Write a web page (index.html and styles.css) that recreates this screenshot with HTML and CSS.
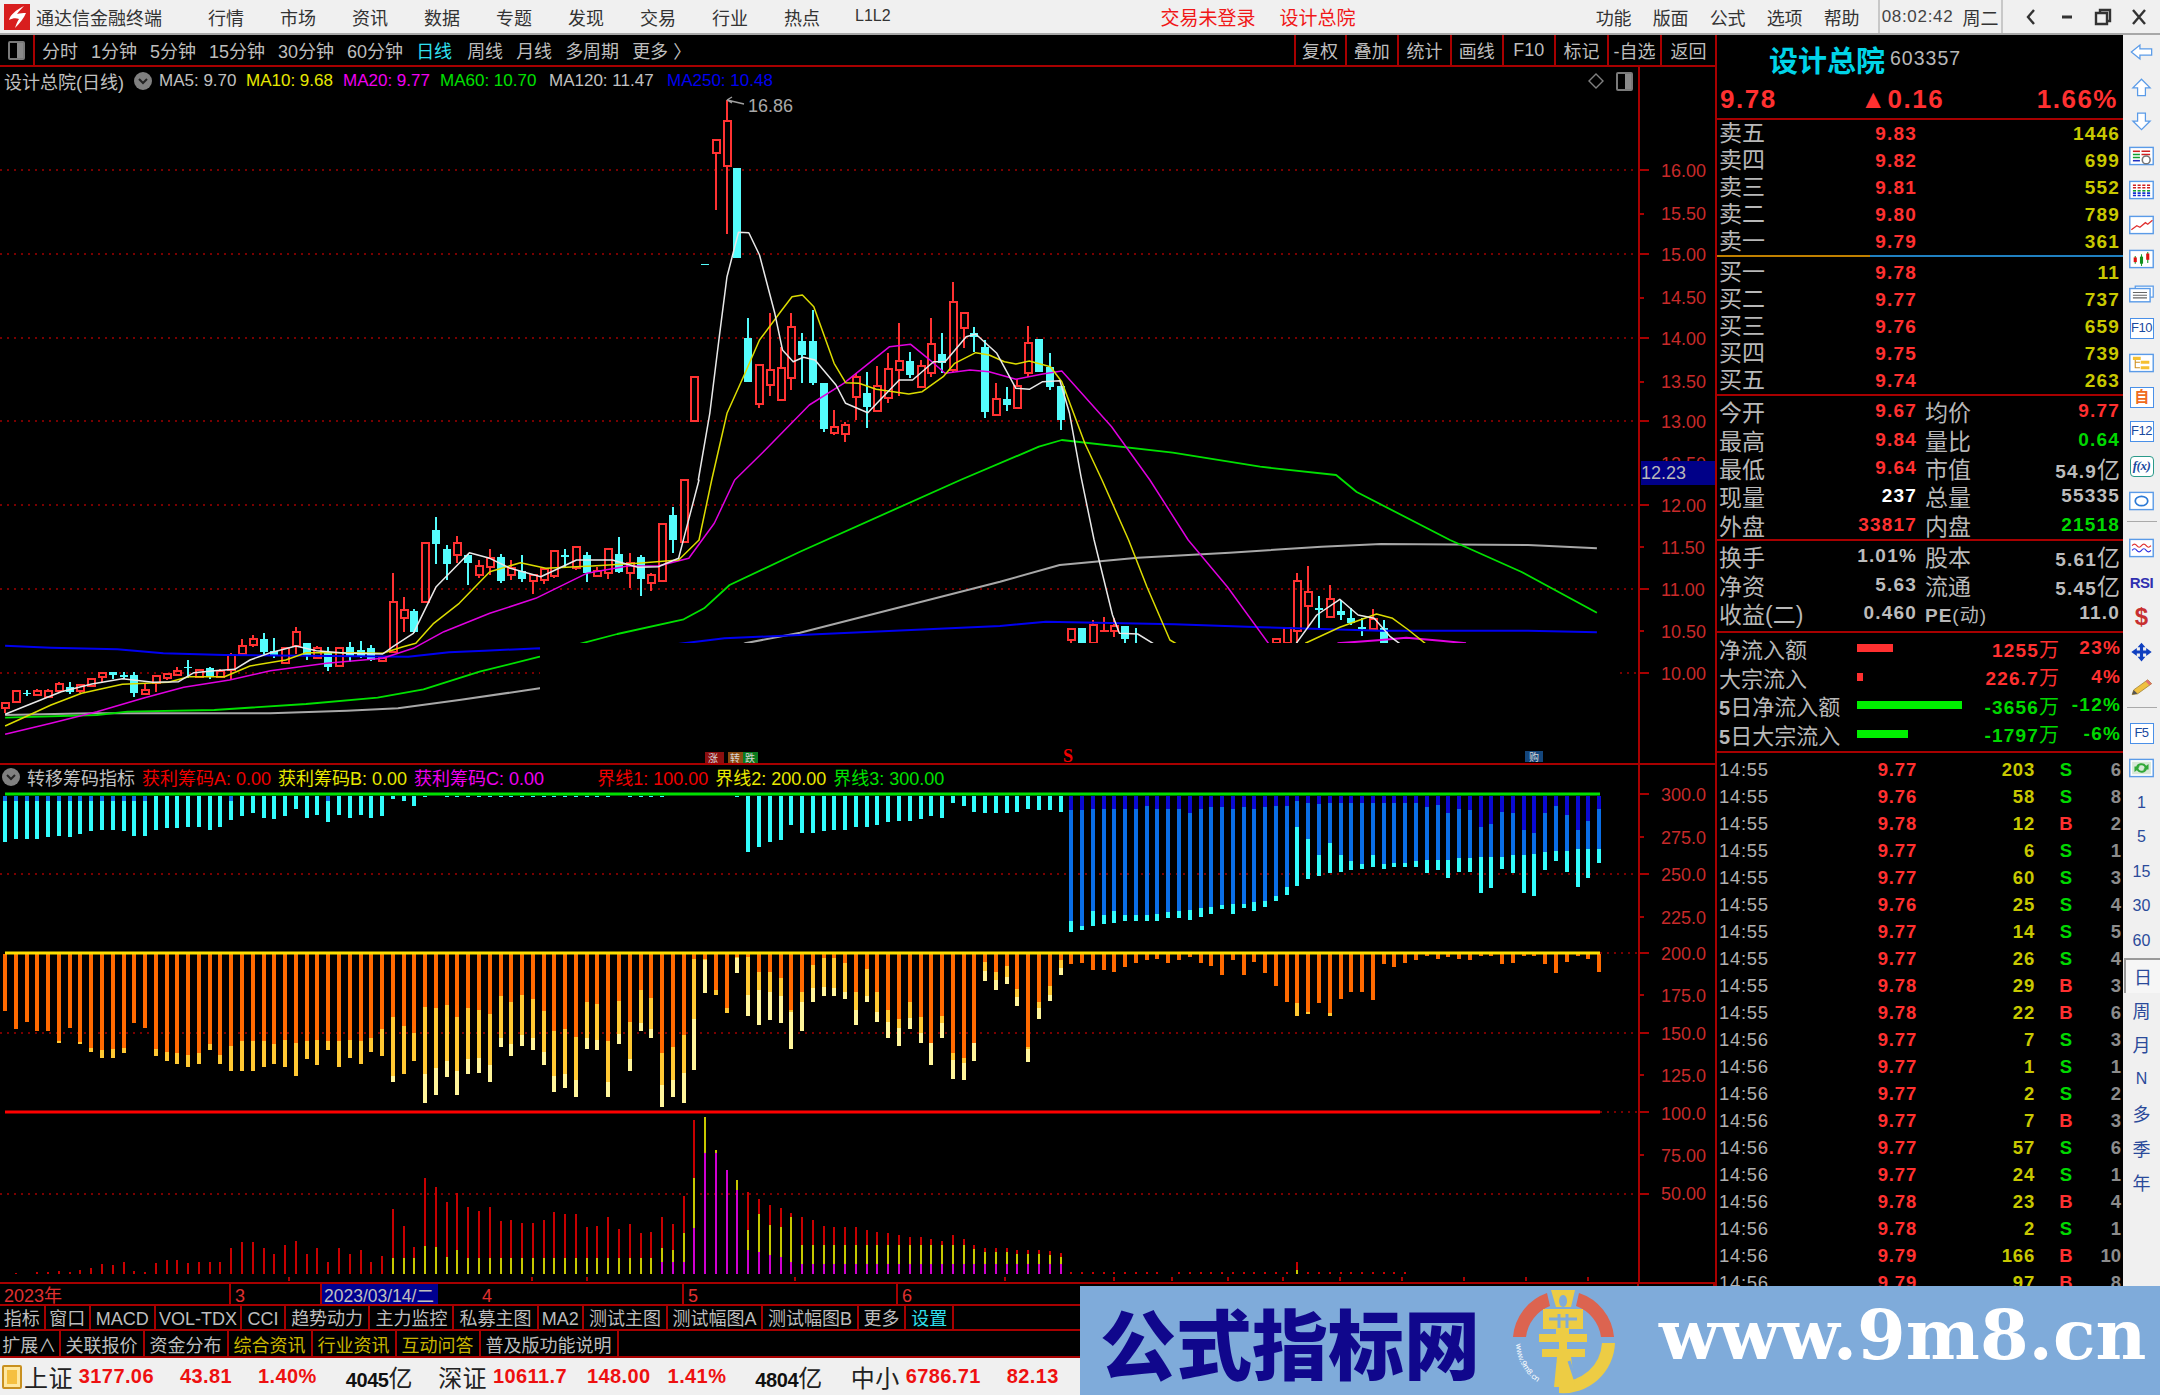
FILE: index.html
```html
<!DOCTYPE html>
<html lang="zh-CN">
<head>
<meta charset="utf-8">
<title>通达信金融终端</title>
<link rel="stylesheet" href="styles.css">
</head>
<body>
<div class="app">
  <header class="titlebar">
    <svg class="applogo" viewBox="0 0 26 26"><rect width="26" height="26" fill="#d81e1e"/><path d="M20 2 C12 6 6 11 5 16 C9 14 12 14 15 15 C13 18 12 21 11 24 C16 19 20 14 22 9 C19 9 16 9 13 10 C15 7 18 4 20 2Z" fill="#fff"/></svg>
    <span class="apptitle">通达信金融终端</span>
    <nav class="menu"><span>行情</span><span>市场</span><span>资讯</span><span>数据</span><span>专题</span><span>发现</span><span>交易</span><span>行业</span><span>热点</span><span class="l12">L1L2</span></nav>
    <div class="alerts"><span>交易未登录</span><span>设计总院</span></div>
    <nav class="menu menu-r"><span>功能</span><span>版面</span><span>公式</span><span>选项</span><span>帮助</span></nav>
    <div class="clock"><span class="time">08:02:42</span><span>周二</span></div>
    <div class="winbtns">
      <svg viewBox="0 0 14 18"><path d="M10 2 L4 9 L10 16" fill="none" stroke="#333" stroke-width="2.4"/></svg>
      <svg viewBox="0 0 14 18"><path d="M2 9 H12" stroke="#333" stroke-width="3"/></svg>
      <svg viewBox="0 0 18 18"><path d="M6 5 V2 H16 V13 H13 M2 5 H13 V16 H2 Z" fill="none" stroke="#333" stroke-width="2.4"/></svg>
      <svg viewBox="0 0 16 18"><path d="M2 2 L14 16 M14 2 L2 16" stroke="#333" stroke-width="2.4"/></svg>
    </div>
  </header>

  <div class="main">
    <div class="work">
      <div class="leftcol">
        <div class="toolbar">
          <div class="tb-icon"><i class="sq"></i></div>
          <div class="periods"><span>分时</span><span>1分钟</span><span>5分钟</span><span>15分钟</span><span>30分钟</span><span>60分钟</span><span class="cyan">日线</span><span>周线</span><span>月线</span><span>多周期</span><span>更多 〉</span></div>
          <div class="tb-right"><span>复权</span><span>叠加</span><span>统计</span><span>画线</span><span>F10</span><span>标记</span><span>-自选</span><span>返回</span></div>
        </div>

        <div class="chart">
          <svg class="plot" width="1715" height="1215" viewBox="0 67 1715 1215" xmlns="http://www.w3.org/2000/svg">
            <defs>
              <clipPath id="mainclip"><polygon points="0,67 1638,67 1638,643 540,643 540,764 0,764"/></clipPath>
            </defs>
            <g class="dots">
              <path clip-path="url(#mainclip)" d="M0 170H1638M0 254H1638M0 338H1638M0 421H1638M0 505H1638M0 589H1638M0 673H1638"/>
              <path d="M1620 673H1638M0 874H1638M0 1033H1638M0 1194H1638M1600 953H1638M1600 1112H1638"/>
            </g>
            <g id="lower"></g>
            <g id="candles" clip-path="url(#mainclip)"></g>
            <g id="mas" clip-path="url(#mainclip)" fill="none"></g>
            <path class="limit" stroke="#00e000" d="M5 794H1600"/>
            <path class="limit" stroke="#ffe000" d="M5 953H1600"/>
            <path class="limit" stroke="#ff0000" d="M5 1112H1600"/>
            <path class="arrow" d="M727 100 L744 104 M727 100 l5 -3 M727 100 l5 3"/>
            <text class="hi" x="748" y="112">16.86</text>
            <g class="redline">
              <path d="M0 764H1715M1639 67V1282"/>
              <path d="M1640 170h9M1640 254h9M1640 338h9M1640 421h9M1640 505h9M1640 589h9M1640 673h9M1640 214h4M1640 298h4M1640 382h4M1640 547h4M1640 631h4M1640 794h9M1640 874h9M1640 953h9M1640 1033h9M1640 1112h9M1640 1194h9M1640 837h4M1640 917h4M1640 995h4M1640 1075h4M1640 1155h4"/>
              <path d="M289 1277v4M532 1277v4M587 1277v4M795 1277v4M1005 1277v4M1114 1277v4M1172 1277v4M1228 1277v4M1283 1277v4M1340 1277v4M1402 1277v4M1464 1277v4M1526 1277v4M1588 1277v4"/>
            </g>
            <g class="axis">
              <text x="1661" y="177">16.00</text><text x="1661" y="220">15.50</text><text x="1661" y="261">15.00</text><text x="1661" y="304">14.50</text><text x="1661" y="345">14.00</text><text x="1661" y="388">13.50</text><text x="1661" y="428">13.00</text><text x="1661" y="470">12.50</text><text x="1661" y="512">12.00</text><text x="1661" y="554">11.50</text><text x="1661" y="596">11.00</text><text x="1661" y="638">10.50</text><text x="1661" y="680">10.00</text>
              <text x="1661" y="801">300.0</text><text x="1661" y="844">275.0</text><text x="1661" y="881">250.0</text><text x="1661" y="924">225.0</text><text x="1661" y="960">200.0</text><text x="1661" y="1002">175.0</text><text x="1661" y="1040">150.0</text><text x="1661" y="1082">125.0</text><text x="1661" y="1120">100.0</text><text x="1661" y="1162">75.00</text><text x="1661" y="1200">50.00</text>
            </g>
            <rect x="1641" y="461" width="74" height="24" fill="#000088"/>
            <text class="cur" x="1641" y="479">12.23</text>
            <g class="marks">
              <rect x="705" y="752" width="19" height="11" fill="#8c0f0f"/><text x="708" y="762">涨</text>
              <rect x="728" y="752" width="15" height="11" fill="#8a4a10"/><rect x="743" y="752" width="15" height="11" fill="#0a7a1e"/><text x="730" y="762">转</text><text x="745" y="762">跌</text>
              <text class="s" x="1063" y="762">S</text>
              <rect x="1525" y="751" width="18" height="11" fill="#14467c"/><text x="1529" y="761">购</text>
            </g>
            <g class="diamond"><path d="M1596 74 L1603 81 L1596 88 L1589 81Z"/></g>
          </svg>

          <div class="legend legend-main">
            <span class="gray stock">设计总院(日线)</span>
            <svg class="chev" viewBox="0 0 18 18"><circle cx="9" cy="9" r="9" fill="#808080"/><path d="M5 7 L9 11 L13 7" fill="none" stroke="#222" stroke-width="2"/></svg>
            <span class="gray w1">MA5: 9.70</span><span class="yel w2">MA10: 9.68</span><span class="mag w2">MA20: 9.77</span><span class="grn w3">MA60: 10.70</span><span class="gray w3">MA120: 11.47</span><span class="blu">MA250: 10.48</span>
          </div>
          <i class="sq sq-chart"></i>

          <div class="legend legend-ind">
            <svg class="chev" viewBox="0 0 18 18"><circle cx="9" cy="9" r="9" fill="#808080"/><path d="M5 7 L9 11 L13 7" fill="none" stroke="#222" stroke-width="2"/></svg>
            <span class="gray">转移筹码指标</span>
            <span class="red">获利筹码A: 0.00</span><span class="yel">获利筹码B: 0.00</span><span class="mag">获利筹码C: 0.00</span>
            <span class="red gapl">界线1: 100.00</span><span class="yel">界线2: 200.00</span><span class="grn">界线3: 300.00</span>
          </div>
        </div>

        <div class="timeline">
          <span class="c1">2023年</span><span class="c2">3</span><span class="c3">2023/03/14/二</span><span class="c4">4</span><span class="c5">5</span><span class="c6">6</span><span class="c7"></span>
        </div>
        <div class="tabs tabs1">
          <span>指标</span><span>窗口</span><span>MACD</span><span>VOL-TDX</span><span>CCI</span><span>趋势动力</span><span>主力监控</span><span>私募主图</span><span>MA2</span><span>测试主图</span><span>测试幅图A</span><span>测试幅图B</span><span>更多</span><span class="cyan">设置</span>
        </div>
        <div class="tabs tabs2">
          <span>扩展∧</span><span>关联报价</span><span>资金分布</span><span class="olive">综合资讯</span><span class="olive">行业资讯</span><span class="olive">互动问答</span><span>普及版功能说明</span>
        </div>
      </div>

      <aside class="panel">
        <div class="qhead">
          <div class="qname"><b>设计总院</b><span>603357</span></div>
          <div class="qprice"><span>9.78</span><span class="chg">▲0.16</span><span>1.66%</span></div>
        </div>
        <div class="book">
          <div><label>卖五</label><b>9.83</b><em>1446</em></div>
          <div><label>卖四</label><b>9.82</b><em>699</em></div>
          <div><label>卖三</label><b>9.81</b><em>552</em></div>
          <div><label>卖二</label><b>9.80</b><em>789</em></div>
          <div><label>卖一</label><b>9.79</b><em>361</em></div>
        </div>
        <div class="midline"></div>
        <div class="book buys">
          <div><label>买一</label><b>9.78</b><em>11</em></div>
          <div><label>买二</label><b>9.77</b><em>737</em></div>
          <div><label>买三</label><b>9.76</b><em>659</em></div>
          <div><label>买四</label><b>9.75</b><em>739</em></div>
          <div><label>买五</label><b>9.74</b><em>263</em></div>
        </div>
        <div class="stats s5">
          <label>今开</label><b class="r">9.67</b><label>均价</label><b class="r">9.77</b>
          <label>最高</label><b class="r">9.84</b><label>量比</label><b class="g">0.64</b>
          <label>最低</label><b class="r">9.64</b><label>市值</label><b>54.9<u>亿</u></b>
          <label>现量</label><b class="w">237</b><label>总量</label><b>55335</b>
          <label>外盘</label><b class="r">33817</b><label>内盘</label><b class="g">21518</b>
        </div>
        <div class="stats s3">
          <label>换手</label><b>1.01%</b><label>股本</label><b>5.61<u>亿</u></b>
          <label>净资</label><b>5.63</b><label>流通</label><b>5.45<u>亿</u></b>
          <label>收益(二)</label><b>0.460</b><label class="pe">PE<u>(动)</u></label><b>11.0</b>
        </div>
        <div class="flow">
          <label>净流入额</label><i class="bar br w36"></i><b class="r">1255<u>万</u></b><b class="r">23%</b>
          <label>大宗流入</label><i class="bar br w6"></i><b class="r">226.7<u>万</u></b><b class="r">4%</b>
          <label><strong>5</strong>日净流入额</label><i class="bar bg w105"></i><b class="g">-3656<u>万</u></b><b class="g">-12%</b>
          <label><strong>5</strong>日大宗流入</label><i class="bar bg w51"></i><b class="g">-1797<u>万</u></b><b class="g">-6%</b>
        </div>
        <div class="ticks">
          <span>14:55</span><b>9.77</b><em>203</em><i class="g">S</i><s>6</s>
          <span>14:55</span><b>9.76</b><em>58</em><i class="g">S</i><s>8</s>
          <span>14:55</span><b>9.78</b><em>12</em><i class="r">B</i><s>2</s>
          <span>14:55</span><b>9.77</b><em>6</em><i class="g">S</i><s>1</s>
          <span>14:55</span><b>9.77</b><em>60</em><i class="g">S</i><s>3</s>
          <span>14:55</span><b>9.76</b><em>25</em><i class="g">S</i><s>4</s>
          <span>14:55</span><b>9.77</b><em>14</em><i class="g">S</i><s>5</s>
          <span>14:55</span><b>9.77</b><em>26</em><i class="g">S</i><s>4</s>
          <span>14:55</span><b>9.78</b><em>29</em><i class="r">B</i><s>3</s>
          <span>14:55</span><b>9.78</b><em>22</em><i class="r">B</i><s>6</s>
          <span>14:56</span><b>9.77</b><em>7</em><i class="g">S</i><s>3</s>
          <span>14:56</span><b>9.77</b><em>1</em><i class="g">S</i><s>1</s>
          <span>14:56</span><b>9.77</b><em>2</em><i class="g">S</i><s>2</s>
          <span>14:56</span><b>9.77</b><em>7</em><i class="r">B</i><s>3</s>
          <span>14:56</span><b>9.77</b><em>57</em><i class="g">S</i><s>6</s>
          <span>14:56</span><b>9.77</b><em>24</em><i class="g">S</i><s>1</s>
          <span>14:56</span><b>9.78</b><em>23</em><i class="r">B</i><s>4</s>
          <span>14:56</span><b>9.78</b><em>2</em><i class="g">S</i><s>1</s>
          <span>14:56</span><b>9.79</b><em>166</em><i class="r">B</i><s>10</s>
          <span>14:56</span><b>9.79</b><em>97</em><i class="r">B</i><s>8</s>
        </div>
      </aside>
    </div>

    <aside class="sidebar">
      <div class="si"><svg viewBox="0 0 32 24"><path class="aro" d="M3 12 L14 3 V8 H29 V16 H14 V21Z"/></svg></div>
      <div class="si"><svg viewBox="0 0 32 24"><path class="aro" d="M16 2 L27 13 H21 V23 H11 V13 H5Z"/></svg></div>
      <div class="si"><svg viewBox="0 0 32 24"><path class="aro" d="M16 23 L5 12 H11 V2 H21 V12 H27Z"/></svg></div>
      <div class="si"><svg viewBox="0 0 32 24"><rect class="ibox" x="1" y="1" width="30" height="22"/><path d="M5 6h9" stroke="#d02020" stroke-width="2"/><path d="M16 6h11M16 10h11" stroke="#d02020" stroke-width="2"/><path d="M5 10h9M5 14h9" stroke="#10a030" stroke-width="2"/><path d="M5 18h9" stroke="#2030c0" stroke-width="2"/><circle cx="22" cy="17" r="5" fill="none" stroke="#777" stroke-width="2"/></svg></div>
      <div class="si"><svg viewBox="0 0 32 24"><rect class="ibox" x="1" y="1" width="30" height="22"/><path d="M5 6H27M5 9H27" stroke="#d02020" stroke-width="2"/><path d="M5 13H27" stroke="#10a030" stroke-width="2"/><path d="M5 16H27M5 19H27" stroke="#1030d0" stroke-width="2"/><path d="M10 4V21M16 4V21M22 4V21" stroke="#fff" stroke-width="2"/></svg></div>
      <div class="si"><svg viewBox="0 0 32 24"><rect class="ibox" x="1" y="1" width="30" height="22"/><path d="M3 18 L10 13 L14 15 L21 9 L24 11 L30 6" fill="none" stroke="#e03030" stroke-width="1.6"/></svg></div>
      <div class="si"><svg viewBox="0 0 32 24"><rect class="ibox" x="1" y="1" width="30" height="22"/><path d="M8 8V18M16 6V21M24 3V17" stroke="#20a030" stroke-width="1.4"/><path d="M6 10h4v6H6Z" fill="#e01010"/><path d="M14 9h4v9h-4Z" fill="#10901e"/><path d="M22 5h4v8h-4Z" fill="#e01010"/></svg></div>
      <div class="si"><svg viewBox="0 0 32 24"><path d="M8 5 V2 H31 V16 H27" fill="#fff" stroke="#5a9be8" stroke-width="1.6"/><rect class="ibox" x="1" y="5" width="26" height="17"/><path d="M5 10h18M5 13.500h18M5 17h18" stroke="#666" stroke-width="1.4"/></svg></div>
      <div class="si"><span class="fk">F10</span></div>
      <div class="si"><svg viewBox="0 0 32 24"><rect class="ibox" x="1" y="1" width="30" height="22"/><path d="M8 6V18H14M8 11H14" fill="none" stroke="#d09020" stroke-width="1.4"/><path d="M5 4h10v4H5ZM15 9h11v4H15ZM15 16h11v4H15Z" fill="#f5c030"/></svg></div>
      <div class="si"><span class="fk zi">自</span></div>
      <div class="si"><span class="fk">F12</span></div>
      <div class="si"><span class="fk fx">f(x)</span></div>
      <div class="si"><svg viewBox="0 0 32 24"><rect class="ibox" x="1" y="1" width="30" height="22"/><ellipse cx="16" cy="12" rx="8" ry="6" fill="none" stroke="#2c7ad6" stroke-width="2.2"/></svg></div>
      <hr class="sep">
      <div class="si"><svg viewBox="0 0 32 24"><rect class="ibox" x="1" y="1" width="30" height="22"/><path d="M4 9 q3 -4 6 0 t6 0 t6 0 t6 0" fill="none" stroke="#e03030" stroke-width="1.5"/><path d="M4 15 q3 -4 6 0 t6 0 t6 0 t6 0" fill="none" stroke="#3030e0" stroke-width="1.5"/></svg></div>
      <div class="si"><span class="rsi">RSI</span></div>
      <div class="si"><span class="dollar">$</span></div>
      <div class="si"><svg viewBox="0 0 32 24"><path d="M16 0 L21 6 H18 V10 H22 V7 L29 12 L22 17 V14 H18 V18 H21 L16 24 L11 18 H14 V14 H10 V17 L3 12 L10 7 V10 H14 V6 H11Z" fill="#1040c0"/></svg></div>
      <div class="si"><svg viewBox="0 0 32 24"><path d="M6 17 L24 4 L29 9 L11 22 L4 23Z" fill="#f0c040" stroke="#a08030"/><path d="M24 4 L29 9 L26 11 L21 6Z" fill="#e07070"/><path d="M4 23 L6 17 L11 22Z" fill="#555"/></svg></div>
      <hr class="sep">
      <div class="si"><span class="fk">F5</span></div>
      <div class="si"><svg viewBox="0 0 32 24"><rect class="ibox" x="1" y="1" width="30" height="22"/><rect x="4" y="4" width="24" height="16" fill="#d8e8d8"/><path d="M9 11 a7 6 0 0 1 13 -2 l3 -2 v7 h-7 l2 -2 a4 4 0 0 0 -8 1Z M23 13 a7 6 0 0 1 -13 2 l-3 2 v-7 h7 l-2 2 a4 4 0 0 0 8 -1Z" fill="#30a838"/></svg></div>
      <div class="si nt">1</div><div class="si nt">5</div><div class="si nt">15</div><div class="si nt">30</div><div class="si nt">60</div>
      <div class="si nt on">日</div><div class="si nt">周</div><div class="si nt">月</div><div class="si nt">N</div><div class="si nt">多</div><div class="si nt">季</div><div class="si nt">年</div>
    </aside>
  </div>

  <footer class="status">
    <i class="sticon"></i>
    <div class="idx"><label>上证</label><b>3177.06</b></div><b>43.81</b><b>1.40%</b><em>4045<u>亿</u></em>
    <div class="idx"><label>深证</label><b>10611.7</b></div><b class="t1">148.00</b><b class="t2">1.41%</b><em>4804<u>亿</u></em>
    <div class="idx idx3"><label>中小</label><b>6786.71</b></div><b>82.13</b>
  </footer>

  <div class="banner">
    <span class="cn">公式指标网</span>
    <svg class="blogo" viewBox="0 0 110 108">
      <defs><path id="ringtxt" d="M7 57 A 47 47 0 0 0 42 101"/></defs>
      <path d="M4 50 A 51 51 0 0 1 38 6 L41 19 A 38 38 0 0 0 17 50Z" fill="#dc6450"/>
      <path d="M70 6 A 51 51 0 0 1 105 50 L92 50 A 38 38 0 0 0 67 19Z" fill="#dc6450"/>
      <path d="M106 56 A 52 52 0 0 1 50 106 L50 94 A 40 40 0 0 0 93 56Z" fill="#edcc44"/>
      <text class="ring" font-size="8"><textPath href="#ringtxt">www.9m8.cn</textPath></text>
      <path d="M42 3 H66 L62 20 H47Z M54 8 a4 6 0 1 0 .1 0Z" fill="#edcc44" fill-rule="evenodd"/>
      <path d="M34 22 H74 V42 H60 V47 H78 V55 H58 V62 H76 V70 H62 L66 100 H45 L48 70 H33 V62 H50 V55 H30 V47 H47 V42 H34Z" fill="#edcc44"/>
      <path d="M50 27 V41 M58 27 V41 M40 32 H68 M46 74 L40 92 M60 74 L66 92" stroke="#7fabda" stroke-width="3"/>
    </svg>
    <span class="url">www.9m8.cn</span>
  </div>
</div>
<script src="chart.js"></script>
</body>
</html>
```
FILE: styles.css
```css
* { box-sizing: border-box; }
html, body { margin: 0; padding: 0; background: #000; }
body { width: 2160px; height: 1395px; overflow: hidden; font-family: "Liberation Sans", "Noto Sans CJK SC", sans-serif; color: #c0c0c0; }
label { font-weight: 400; }
u { text-decoration: none; font-weight: 400; }
em, i { font-style: normal; }
.app { width: 2160px; height: 1395px; display: flex; flex-direction: column; position: relative; }

/* title bar */
.titlebar { height: 35px; background: #f0f0f0; border-bottom: 2px solid #a8a8a8; display: flex; align-items: center; color: #333; font-size: 18px; padding-left: 4px; flex: none; white-space: nowrap; }
.applogo { width: 26px; height: 26px; flex: none; }
.apptitle { margin-left: 6px; width: 172px; }
.menu { display: flex; gap: 36px; }
.l12 { font-size: 16px; margin-left: -1px; line-height: 24px; }
.alerts { display: flex; gap: 24px; color: #f01818; font-size: 19px; position: static; margin-left: 270px; }
.menu-r { margin-left: 240px; gap: 21px; }
.clock { margin-left: 18px; border-left: 2px solid #c8c8c8; border-right: 2px solid #c8c8c8; height: 33px; display: flex; align-items: center; padding: 0 0 0 2px; gap: 9px; width: 125px; flex: none; }
.time { font-size: 17px; letter-spacing: .7px; color: #444; }
.winbtns { display: flex; align-items: center; gap: 18px; margin-left: 19px; }
.winbtns svg { height: 18px; width: 18px; }

/* layout */
.main { flex: 1; display: flex; min-height: 0; }
.work { flex: 1; display: flex; min-width: 0; }
.leftcol { width: 1715px; display: flex; flex-direction: column; flex: none; }

/* toolbar */
.toolbar { height: 32px; display: flex; align-items: center; border-bottom: 2px solid #a80000; flex: none; font-size: 18px; color: #bdbdbd; }
.tb-icon { width: 35px; height: 30px; border-right: 2px solid #a80000; display: flex; align-items: center; justify-content: center; }
.sq { display: block; width: 17px; height: 19px; border: 2px solid #7a7a7a; border-radius: 2px; position: relative; background: linear-gradient(to right, #000 55%, #8a8a8a 55%); }
.periods { display: flex; gap: 13px; margin-left: 7px; }
.cyan { color: #30e0f0; }
.periods .cyan { margin-right: 2px; }
.tb-right { margin-left: auto; display: grid; grid-template-columns: 51px 52.500px 53px 51.500px 52.500px 53px 53px 55px; width: 421.500px; height: 30px; }
.tb-right span { border-left: 2px solid #a80000; display: flex; align-items: center; justify-content: center; }

/* chart */
.chart { position: relative; height: 1215px; flex: none; }
.plot { display: block; }
.dots path { stroke: #a00000; stroke-width: 1.5; stroke-dasharray: 2 5; fill: none; }
.limit { stroke-width: 3; fill: none; }
.arrow { stroke: #a0a0a0; stroke-width: 1.4; fill: none; }
.hi { fill: #a8a8a8; font-size: 18px; }
.redline path { stroke: #a80000; stroke-width: 2; fill: none; shape-rendering: crispEdges; }
.axis text { fill: #c82a2a; font-size: 18px; }
.cur { fill: #b8b8b8; font-size: 18px; }
.marks text { fill: #d8d8d8; font-size: 10px; }
.marks .s { fill: #f00000; font-size: 18px; font-family: "Liberation Serif", serif; font-weight: bold; }
.diamond path { fill: none; stroke: #808080; stroke-width: 1.4; }
.sq-chart { position: absolute; left: 1616px; top: 5px; }
.legend { position: absolute; display: flex; align-items: center; font-size: 17px; white-space: nowrap; }
.legend-main { left: 4px; top: 2px; height: 24px; }
.legend-ind { left: 2px; top: 698px; height: 24px; font-size: 18px; }
.stock { width: 130px; font-size: 18px; }
.chev { width: 18px; height: 18px; margin-right: 7px; flex: none; }
.gray { color: #c0c0c0; }
.yel { color: #e8e800; }
.mag { color: #f000f0; }
.grn { color: #00e000; }
.blu { color: #0000f0; }
.red { color: #f00000; }
.w1 { width: 87px; }
.w2 { width: 97px; }
.w3 { width: 109px; }
.w3.gray { width: 118px; }
.legend-ind span { margin-right: 7px; }
.legend-ind .gapl { margin-left: 46px; }

/* time axis */
.timeline { height: 24px; border-top: 2px solid #a80000; border-bottom: 2px solid #a80000; display: grid; grid-template-columns: 231px 91px 116px 40px 206px 214px 741px 1fr; grid-template-rows: 20px; color: #e03030; font-size: 18px; line-height: 24px; flex: none; position: relative; }
.timeline span { border-right: 2px solid #a80000; padding-left: 4px; white-space: nowrap; }
.timeline .c1 { grid-column: 1; }
.timeline .c2 { grid-column: 2; }
.timeline .c3 { grid-column: 3; background: #000090; color: #c0c0c0; padding-left: 2px; font-size: 17.500px; border-right: 0; }
.timeline .c4 { grid-column: 5; }
.timeline .c5 { grid-column: 6; }
.timeline .c6 { grid-column: 7; }

/* tabs */
.tabs { display: grid; font-size: 18px; color: #bdbdbd; flex: none; }
.tabs span { border-right: 2px solid #a80000; text-align: center; white-space: nowrap; overflow: hidden; }
.tabs1 { height: 25px; line-height: 20px; border-bottom: 2px solid #a80000; grid-template-columns: 45.500px 45.500px 64.600px 86.800px 43.400px 84.700px 84px 84.100px 45.400px 84px 95px 96px 47px 48.500px 1fr; }
.tabs1 span { padding-top: 3px; }
.tabs2 { height: 27px; line-height: 20px; border-bottom: 2px solid #a80000; grid-template-columns: 60.600px 84px 84px 84px 84px 84px 138px 1fr; }
.tabs2 span { padding-top: 5px; }
.olive { color: #c8b400; }

/* quote panel */
.panel { width: 408px; flex: none; border-left: 2px solid #a80000; display: flex; flex-direction: column; overflow: hidden; font-size: 19px; }
.panel label { font-size: 23px; color: #b8b8b8; white-space: nowrap; }
.panel b { letter-spacing: 1.200px; }
.qhead { height: 85px; border-bottom: 2px solid #a80000; flex: none; }
.qname { height: 44px; display: flex; align-items: center; padding: 3px 0 0 52px; gap: 5px; }
.qname b { color: #00d4e8; font-size: 29px; letter-spacing: 0; font-weight: 700; }
.qname span { font-size: 19.500px; color: #b8b8b8; letter-spacing: 1px; }
.qprice { height: 40px; display: flex; justify-content: space-between; align-items: center; padding: 0 5px 0 3px; color: #ff3030; font-size: 26px; font-weight: 700; letter-spacing: 1.500px; }
.chg { margin-left: -9px; }
.book { flex: none; }
.book div { height: 27px; display: grid; grid-template-columns: 100px 98px 1fr; grid-template-rows: 26px; align-items: center; padding: 0 3px 1px 2px; }
.book label { line-height: 26px; }
.book b { color: #ff3030; text-align: right; padding-top: 1px; }
.book em { color: #c8c800; text-align: right; font-weight: 700; letter-spacing: 1.200px; padding-top: 1px; }
.midline { height: 2px; flex: none; background: linear-gradient(to right, #c08000 153px, #2080c0 153px); margin-bottom: 2px; }
.buys { border-bottom: 2px solid #a80000; }
.stats { display: grid; grid-template-columns: 90px 108px 74px 1fr; align-items: center; padding: 1px 3px 0 2px; border-bottom: 2px solid #a80000; flex: none; }
.stats b { text-align: right; white-space: nowrap; color: #bcbcbc; }
.stats > label:nth-child(4n+3) { padding-left: 8px; }
.stats b u { font-size: 23px; letter-spacing: 0; }
.s5 { grid-auto-rows: 28.400px; height: 145px; }
.s3 { grid-auto-rows: 28.500px; height: 92px; padding-bottom: 4px; }
.pe { font-weight: 700; font-size: 19px !important; letter-spacing: 1px; }
.pe u { font-size: 19px; }
.r { color: #ff3030 !important; }
.g { color: #00d800 !important; }
.w { color: #fff !important; }
.flow { display: grid; grid-template-columns: 138px 122px 80px 62px; grid-auto-rows: 28.500px; align-items: center; padding: 1px 2px 3px 2px; height: 120px; border-bottom: 2px solid #a80000; flex: none; }
.flow label { font-size: 22px; }
.flow strong { font-family: "Liberation Sans", sans-serif; font-size: 20px; }
.flow b { text-align: right; white-space: nowrap; }
.flow b u { font-size: 20px; letter-spacing: 0; }
.bar { height: 8px; display: block; }
.br { background: #ff3030; }
.bg { background: #00f000; }
.w36 { width: 36px; }
.w6 { width: 6px; }
.w105 { width: 105px; }
.w51 { width: 51px; }
.ticks { display: grid; grid-template-columns: 90px 108px 118px 62px 24px; grid-auto-rows: 27px; align-items: center; padding: 3px 2px 0; line-height: 27px; flex: none; font-weight: 700; font-size: 18.500px; }
.ticks span { color: #b0b0b0; font-weight: 400; letter-spacing: .7px; }
.ticks b { color: #ff3030; text-align: right; letter-spacing: .8px; }
.ticks em { color: #c8c800; text-align: right; letter-spacing: .8px; }
.ticks i { text-align: center; font-weight: 700; }
.ticks s { text-decoration: none; color: #8c8c8c; text-align: right; }

/* sidebar */
.sidebar { width: 37px; flex: none; background: #f0f0f0; display: flex; flex-direction: column; }
.si { height: 34.500px; flex: none; display: flex; align-items: center; justify-content: center; }
.si svg { width: 25px; height: 22px; }
.aro { fill: #fff; stroke: #5a9be8; stroke-width: 1.6; }
.ibox { fill: #fff; stroke: #5a9be8; stroke-width: 1.8; }
.fk { width: 24px; height: 21px; border: 1.500px solid #4a90e8; background: #fff; color: #1a4aa0; font-size: 13px; line-height: 18px; text-align: center; letter-spacing: -.5px; }
.zi { color: #f06a20; font-size: 15px; font-weight: 700; }
.fx { border-color: #2a9a8a; border-radius: 4px; font-style: italic; font-weight: 700; font-family: "Liberation Serif", serif; }
.rsi { color: #3030b0; font-weight: 700; font-size: 15px; letter-spacing: -.5px; }
.dollar { color: #c83030; font-weight: 700; font-size: 24px; }
.sep { height: 1px; width: 30px; border: 0; background: #aaa; margin: 3px auto 9px; flex: none; }
.nt { color: #2a4a9a; font-size: 16px; }
.on { background: #f6f6f6; border-top: 2px solid #999; border-left: 2px solid #999; margin: 0 0 0 1px; font-size: 18px; }
.nt:nth-last-child(-n+6) { font-size: 18px; }
.nt:nth-last-child(4) { font-size: 16px; }

/* status bar */
.status { height: 37px; background: #f0f0f0; display: flex; align-items: center; gap: 26px; font-size: 20px; color: #ee1010; flex: none; padding-left: 2px; letter-spacing: .4px; }
.status b { font-weight: 700; }
.sticon { width: 20px; height: 24px; background: #f5c040; border: 2px solid #c89020; border-radius: 2px; margin-right: -26px; box-shadow: inset 0 0 0 3px #ffe8a0; flex: none; }
.idx { display: flex; align-items: center; gap: 6px; }
.idx label { color: #222; font-size: 24px; }
.idx:first-of-type { margin-left: 2px; }
.idx3 { margin-left: 3px; }
.status em { color: #111; font-weight: 700; letter-spacing: -.4px; margin-left: 3px; }
.status em u { font-size: 24px; color: #222; }
.t1 { margin-left: -6px; }
.t2 { margin-left: -9px; }

/* watermark */
.banner { position: absolute; left: 1080px; right: 0; bottom: 0; height: 109px; background: #7fabda; display: flex; align-items: center; }
.cn { color: #10078c; font-family: "Noto Sans CJK SC", sans-serif; font-weight: 900; font-size: 76px; line-height: 1; margin-left: 20px; white-space: nowrap; }
.blogo { width: 110px; height: 108px; margin-left: 29px; flex: none; }
.ring { fill: #fff; font-family: "Liberation Sans", sans-serif; }
.url { color: #fff; font-family: "DejaVu Serif", serif; font-weight: 700; font-size: 70px; margin-left: 40px; white-space: nowrap; margin-top: -12px; }
```
FILE: chart.js
```js
(function () {
  var NS = 'http://www.w3.org/2000/svg';
  function X(i) { return Math.round(5.1 + 10.77 * i); }
  function add(parent, d, stroke, w, crisp) {
    var p = document.createElementNS(NS, 'path');
    p.setAttribute('d', d);
    p.setAttribute('stroke', stroke);
    p.setAttribute('stroke-width', w);
    p.setAttribute('fill', 'none');
    if (crisp) p.setAttribute('shape-rendering', 'crispEdges');
    parent.appendChild(p);
  }
  function Bars() { this.m = {}; }
  Bars.prototype.seg = function (c, x, a, b) {
    if (b <= a) return;
    this.m[c] = (this.m[c] || '') + 'M' + x + ' ' + a.toFixed(1) + 'V' + b.toFixed(1);
  };
  Bars.prototype.draw = function (g, w) {
    for (var c in this.m) add(g, this.m[c], c, w, true);
  };

  /* ---------- candles: [i, up?, boxTop, boxBottom, wickTop, wickBottom] ---------- */
  var c8 = [
    [0,1,668,685,668,700],[1,1,632,665,632,668],[2,0,638,642,630,648],[3,1,632,645,628,648],[4,1,632,650,628,652],
    [5,1,612,632,605,640],[6,0,622,635,605,642],[7,1,614,632,612,638],[8,1,596,618,594,622],[9,1,580,590,578,606],
    [10,0,577,585,575,598],[11,0,585,592,576,598],[12,0,586,640,576,652],[13,1,630,643,612,645],[14,1,587,610,585,635],
    [15,1,581,595,578,600],[16,1,572,585,562,588],[17,0,560,565,541,595],[18,1,570,590,568,592],[19,0,564,590,562,598],
    [20,1,572,590,566,595],[21,1,525,570,520,600],[22,1,497,522,478,524],[23,1,478,494,465,500],[24,0,478,515,460,525],
    [25,0,512,527,473,535],[26,1,505,548,500,550],[27,1,456,498,442,522],[28,0,488,528,488,540],[29,1,505,535,498,538],
    [30,0,515,560,500,572],[31,1,505,558,500,560],[32,0,500,530,487,545],[33,0,511,527,482,535],[34,0,505,540,495,542],
    [35,1,533,542,530,545],[36,1,367,515,280,520],[37,1,390,415,352,455],[38,0,392,457,388,460],[39,1,190,365,190,365],
    [40,0,150,193,110,252],[41,0,208,252,195,300],[42,1,190,225,167,250],[43,0,225,248,222,315],[44,1,258,285,240,295],
    [45,1,235,260,208,285],[46,0,230,302,222,308],[47,1,265,285,240,300],[48,0,272,297,225,305],[49,1,285,302,282,342],
    [50,1,268,300,265,312],[51,1,213,288,210,295],[52,0,225,230,208,262],[53,1,200,265,198,270],[54,0,226,278,215,305],
    [55,1,272,288,262,292],[56,1,208,278,205,298],[57,0,222,275,172,278],[58,1,250,278,218,325],[59,0,230,297,225,347],
    [60,1,285,310,280,333],[61,1,132,302,132,302],[62,0,105,180,82,220],[63,1,0,185,0,185]
  ];
  var c9 = [
    [64,1,892,1023,892,1023],[65,0,551,556,551,556],[66,1,180,218,180,390],[67,1,122,258,60,462],[68,0,265,533,265,533],
    [69,0,773,907,715,907],[70,1,855,973,855,985],[71,1,870,915,700,948],[72,1,865,960,800,960],[73,1,740,895,700,930],
    [74,0,783,826,760,908],[75,0,783,908,690,916],[76,0,908,1047,908,1055],[77,1,1040,1060,990,1065],[78,1,1035,1063,1025,1087],
    [79,1,892,950,880,1020],[80,0,940,980,877,1043],[81,1,918,992,858,995],[82,1,868,955,820,970],[83,1,842,870,728,947],
    [84,0,842,885,815,895],[85,1,857,920,840,920],[86,1,792,880,715,890],[87,0,823,848,760,880],[88,1,665,870,607,875],
    [89,1,698,744,698,805],[90,0,760,772,742,815],[91,0,800,997,780,1015],[92,1,958,1005,908,1005],[93,0,958,975,922,993],
    [94,1,918,983,898,983],[95,1,788,880,737,890],[96,0,778,877,778,877],[97,0,860,920,818,930],[98,0,918,1020,918,1050]
  ];
  var c11 = [
    [99,1,268,300,268,310],[100,0,265,310,265,310],[101,1,255,310,240,310],[102,1,272,274,230,274],[103,1,258,272,235,290],
    [104,0,258,297,258,310],[105,0,296,297,265,310],[118,1,298,310,298,310],[119,1,265,310,265,310],[120,1,123,272,100,310],
    [121,1,155,197,77,265],[122,0,205,210,168,265],[123,1,178,230,135,230],[124,0,212,225,180,240],[125,0,235,250,205,255],
    [126,0,262,267,235,288],[127,1,238,266,208,266],[128,0,263,310,240,310]
  ];
  var candG = document.getElementById('candles');
  function candles(list, y0) {
    list.forEach(function (c) {
      var x = X(c[0]), t = y0 + c[2] / 3, b = y0 + c[3] / 3, wt = y0 + c[4] / 3, wb = y0 + c[5] / 3;
      if (c[1]) {
        add(candG, 'M' + (x - 3) + ' ' + t + 'H' + (x + 4) + 'V' + b + 'H' + (x - 3) + 'Z', '#ff3232', 1.8, true);
        if (wt < t) add(candG, 'M' + x + ' ' + wt + 'V' + t, '#ff3232', 1.6, true);
        if (wb > b) add(candG, 'M' + x + ' ' + b + 'V' + wb, '#ff3232', 1.6, true);
      } else {
        if (wb > wt) add(candG, 'M' + x + ' ' + wt + 'V' + wb, '#54fcfc', 1.6, true);
        add(candG, 'M' + x + ' ' + t + 'V' + b, '#54fcfc', 8, true);
      }
    });
  }
  candles(c8, 480);
  candles(c9, 80);
  candles(c11, 540);

  /* ---------- moving averages ---------- */
  function pts(arr, sx, x0, y0) {
    return arr.map(function (p) { return [x0 + p[0] / sx, y0 + p[1] / 3]; });
  }
  function z8(a) { return pts(a, 1.96, 0, 480); }
  function z9(a) { return pts(a, 2.613, 660, 80); }
  function z11(a) { return pts(a, 2.178, 1000, 540); }
  function line(p, color, w) {
    var d = p.map(function (q, i) { return (i ? 'L' : 'M') + q[0].toFixed(1) + ' ' + q[1].toFixed(1); }).join('');
    var el = document.createElementNS(NS, 'path');
    el.setAttribute('d', d); el.setAttribute('stroke', color); el.setAttribute('stroke-width', w);
    el.setAttribute('stroke-linejoin', 'round');
    document.getElementById('mas').appendChild(el);
  }
  line(z8([[10,705],[180,700],[530,700],[680,692],[780,685],[900,660],[1058,625],[1200,600],[1340,570],[1460,490],[1568,458]]).concat(z11([[0,125],[130,75],[300,53],[500,38],[700,20],[830,12],[1150,15],[1300,25]])), '#a8a8a8', 2);
  line(z8([[10,713],[190,705],[250,695],[420,690],[600,672],[740,653],[830,628],[940,575],[1058,530],[1140,490],[1210,462],[1340,418],[1380,385],[1430,315],[1568,215]]).concat(z9([[785,1200],[990,1100],[1050,1080],[1340,1118],[1568,1160]])).concat(z11([[732,-195],[777,-144],[980,0],[1135,95],[1300,218]])), '#00e000', 1.8);
  line(z8([[10,497],[100,503],[230,508],[320,520],[440,525],[800,530],[880,517],[950,512],[1058,505],[1200,520],[1340,490],[1420,475],[1568,465]]).concat(z11([[0,258],[100,245],[380,253],[570,262],[830,272],[1150,272],[1300,277]])), '#0000f0', 2);
  line(z8([[10,763],[100,730],[190,695],[280,655],[360,622],[450,600],[530,572],[640,550],[750,535],[810,505],[870,455],[960,400],[1050,355],[1150,280],[1230,258],[1290,258],[1350,235],[1400,130],[1440,0]]).concat(z9([[200,1195],[275,1110],[390,975],[480,910],[600,800],[655,793],[700,835],[745,880],[810,870],[860,875],[930,898],[1000,882],[1050,873],[1110,950],[1180,1040],[1280,1200]])).concat(z11([[410,0],[495,140],[590,320]])), '#e000e0', 1.5);
  line(z11([[735,310],[830,300],[885,293],[960,302],[1015,310]]), '#e000e0', 2);
  line(z8([[10,738],[50,710],[100,675],[160,640],[240,613],[330,607],[370,590],[440,590],[490,558],[560,540],[600,518],[700,518],[750,520],[790,500],[815,490],[850,430],[900,370],[960,275],[1020,248],[1070,265],[1160,258],[1250,250],[1330,240],[1370,180],[1395,0]]).concat(z9([[135,1200],[175,1000],[222,880],[260,780],[315,695],[345,650],[372,645],[402,680],[455,850],[485,908],[520,910],[565,928],[650,942],[685,935],[740,890],[770,850],[825,818],[860,825],[900,845],[930,852],[965,843],[1020,860],[1050,905],[1110,1090],[1155,1200]])).concat(z11([[280,0],[320,140],[370,300],[395,320]])), '#dcdc00', 1.5);
  line(z11([[665,310],[740,262],[820,222],[855,235],[890,270],[935,320]]), '#dcdc00', 1.5);
  line(z8([[10,703],[60,672],[120,635],[180,612],[240,596],[300,607],[350,605],[380,578],[420,572],[460,568],[490,540],[530,518],[580,498],[620,512],[680,520],[750,522],[770,500],[810,460],[855,320],[920,218],[960,235],[1000,265],[1060,290],[1130,240],[1200,240],[1250,262],[1290,260],[1330,235],[1370,0]]).concat(z9([[100,1200],[130,1000],[155,770],[175,590],[205,457],[232,458],[260,525],[300,700],[320,810],[348,845],[375,832],[405,840],[460,915],[485,970],[543,998],[625,900],[660,900],[715,845],[745,845],[800,770],[825,762],[880,820],[930,925],[965,928],[1000,905],[1045,902],[1070,1000],[1100,1190]])).concat(z11([[205,0],[245,225],[260,280],[300,282],[345,320]])), '#e8e8e8', 1.5);
  line(z11([[640,320],[690,225],[740,178],[780,225],[815,235],[850,290],[880,320]]), '#e8e8e8', 1.5);

  /* ---------- lower indicator ---------- */
  var lower = document.getElementById('lower');
  function Y(v) { return 760 + v / 3; }
  var top4 = new Bars();
  var cy = '#32fcfc', bl = '#0a6ee6', nv = '#0a0ad2';
  var cyan = [245,237,236,236,232,228,232,222,214,209,209,214,228,228,209,205,205,200,200,209,200,181,168,160,173,178,168,146,173,164,187,164,173,164,173,168,118,123,137];
  var cyan2 = {69:277,70:260,71:245,72:241,73:196,74:218,75:218,76:214,77:209,78:209,79:200,80:200,81:196,82:187,83:182,84:182,85:178,86:169,87:173,88:128,89:137,90:155,91:160,92:160,93:160,94:155,95:146,96:150,97:150,98:155};
  cyan.forEach(function (b, i) {
    var x = X(i);
    if (i < 14 || i === 21 || i === 30) { top4.seg(bl, x, Y(108), Y(122)); top4.seg(cy, x, Y(122), Y(b)); }
    else top4.seg(cy, x, Y(108), Y(b));
  });
  for (var i = 39; i <= 68; i++) {
    if (i <= 61 && i !== 40 && i !== 57) top4.seg(cy, X(i), Y(108), Y(112));
    if (i === 68) top4.seg(cy, X(i), Y(108), Y(112));
  }
  for (var k in cyan2) top4.seg(cy, X(+k), Y(108), Y(cyan2[k]));
  [[150,484,515],[150,498,511],[146,453,497],[146,466,493],[146,453,488],[146,466,484],[146,466,484],[137,466,484],[146,462,484],[146,457,475],
   [146,453,475],[159,449,479],[146,444,470],[141,440,461],[141,435,448],[146,431,461],[141,431,444],[146,426,453],[141,422,440],[137,408,422],
   [137,381,404],[123,200,377],[128,237,358],[132,286,349],[128,250,340],[128,286,336],[128,304,331],[128,313,327],[128,286,322],[128,313,327],
   [128,309,322],[128,309,322],[128,304,322],[141,300,340],[136,300,331],[159,300,353],[146,295,336],[150,295,335],[200,291,398],[191,290,385],
   [155,290,326],[159,286,340],[209,286,398],[218,282,407],[159,277,331],[137,273,304],[164,272,335],[209,268,381],[182,268,353],[146,268,308]
  ].forEach(function (s, n) {
    var x = X(99 + n);
    top4.seg(nv, x, Y(108), Y(s[0])); top4.seg(bl, x, Y(s[0]), Y(s[1])); top4.seg(cy, x, Y(s[1]), Y(s[2]));
  });
  var or = '#ff6a00', gd = '#ffc832', pl = '#fff59a';
  var orange = [[753],[807],[785],[812],[812],[843,848],[803],[845,853],[863,875],[870,893],[868,893],[863,880],[790],[803],[867,889],[875,903],[880,911],[885,920],[880,911],[853,871],
    [885,911],[857,934],[843,934],[843,934],[843,920],[853,911],[839,920],[848,947],[843,898],[839,916],[843,871],[843,920],[839,893],[843,911],[835,875],[807,889],[771,947,965],[798,943],[820,903],
    [740,943,1028],[743,925,1005],[735,903,951],[771,934,1005],[745,898,942],[749,893,938],[762,915,965],[708,835,861],[727,852,889],[704,825,857],[717,835,871],[753,875,916],[812,947,996],[807,942,983],[830,960,1010],
    [727,835,866],[731,840,871],[843,965,1010],[722,821,852],[785,898,933],[690,790,812],[713,807,835],[880,974,1041],[861,960,1010],[825,938,1028],[596,776,929],[596,600,700],[690,705],[745,758],[590,595,640],[590,705,767],
    [636,690,794],[636,695,780],[655,708,790],[750,757,866],
    [695,725,812],[615,685,726],[595,680,708],[595,685,708],[610,695,717],[695,750,794],[627,708,726],[695,757,785],[750,785,835],[776,805,857],[726,775,807],[772,820,848],[850,850,915],[768,790,835],[880,900,956],[893,910,960],[848,848,902],[605,632,663],[637,660,690],[618,650,672],[687,712,739],[861,868,906],[726,745,776],[677,704,722],[600,625,645],
    [613],[609],[631],[631],[636],[622],[609],[600],[596],[609],[600],[591],[609],[618],[645],[600],[645],[605],[640],[677],[726],[730,767],[755,762],[730],[760,767],[717],[695],[695],[721],[613],[622],[609],[600],[587],[596],[591],[596],[600],[587],[587],[613],[609],[587],[587],[613],[640],[605],[587],[596],[636]];
  orange.forEach(function (s, i) {
    var x = X(i), a = Y(583);
    top4.seg(or, x, a, Y(s[0]));
    if (s.length > 1) top4.seg(gd, x, Y(s[0]), Y(s[1]));
    if (s.length > 2) top4.seg(pl, x, Y(s[1]), Y(s[2]));
  });
  top4.draw(lower, 4);

  var vol = [1274,1273,1274,1272,1272,1271,1272,1270,1268,1264,1265,1262,1271,1272,1263,1260,1260,1263,1262,1262,1262,
    1248,1242,1242,1248,1254,1245,1241,1254,1248,1262,1248,1254,1250,1262,1256,1209,1226,1247,1178,1187,1202,1193,1207,1211,1207,1221,1220,1223,1223,1220,1212,1214,1214,1227,1226,1217,1229,1224,1233,1232,1217,1224,1196,1120,1117,1150,1170,1180,1192,1199,1205,1208,1213,
    1217,1220,1226,1227,1227,1227,1230,1232,1233,1235,1237,1237,1239,1241,1235,1239,1245,1248,1248,1248,1250,1250,1250,1251,1253];
  for (var v = 99; v <= 130; v++) vol.push(v === 120 ? 1262 : (v === 108 ? 1276 : 1272));
  var BASE = 1274;
  var yTop = {39:1246,40:1247,41:1257,42:1250,61:1248,62:1250,63:1233,64:1178,65:1117,66:1150,67:1170,68:1180,69:1230,70:1214,71:1225,72:1227,73:1217};
  var mTop = {61:1262,62:1262,63:1262,64:1228,65:1153,66:1153,67:1170,68:1190,69:1250,70:1252,71:1255,72:1257,73:1262};
  var vb = new Bars(), vy = new Bars(), vm = new Bars();
  vol.forEach(function (t, i) {
    var x = X(i);
    if (BASE - t <= 0) return;
    vb.seg('#c80000', x, t, BASE);
    var y = yTop[i];
    if (!y) {
      if (i >= 36 && i <= 60) y = 1258;
      else if (i >= 74 && i <= 98) y = Math.max(t + 4, 1245);
      else if (i === 120) y = 1270;
    }
    if (y) vy.seg('#c8c800', x, y, BASE);
    var m = mTop[i] || (i >= 74 && i <= 98 ? 1264 : 0);
    if (m) vm.seg('#d000d0', x, m, BASE);
  });
  vb.draw(lower, 2);
  vy.draw(lower, 2);
  vm.draw(lower, 2);
})();
```
